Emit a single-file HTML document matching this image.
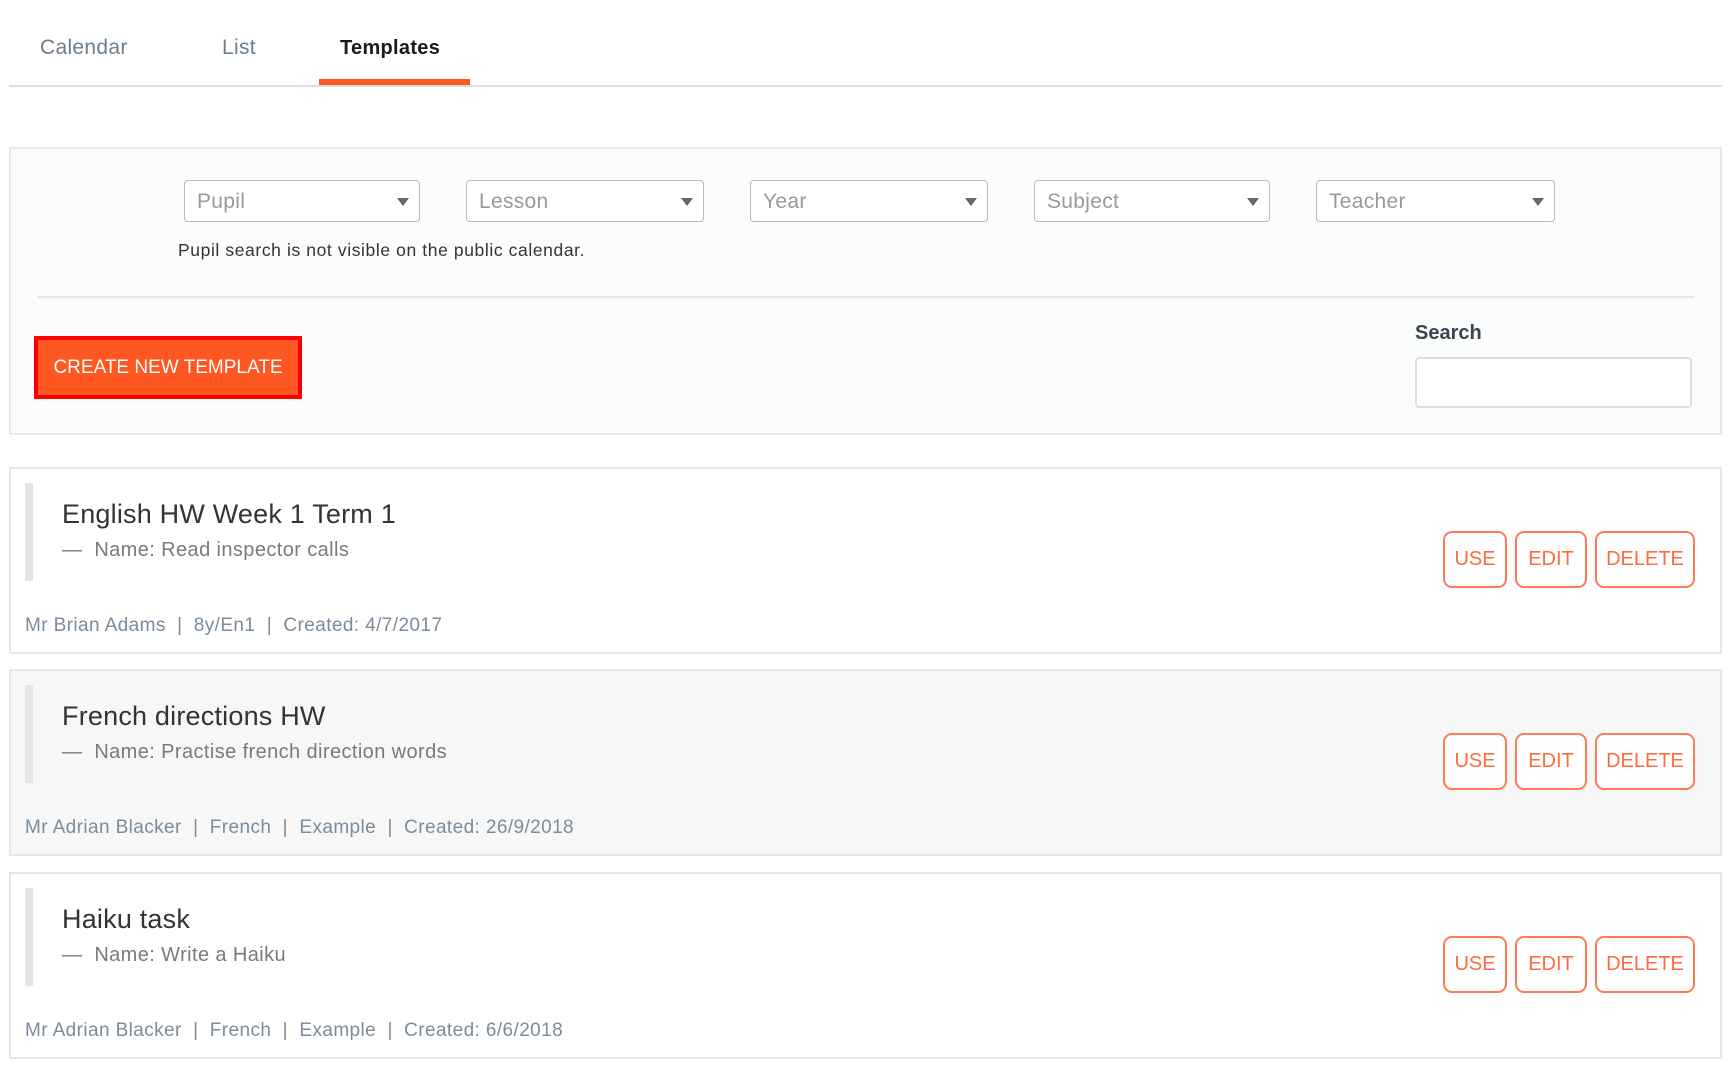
<!DOCTYPE html>
<html><head><meta charset="utf-8"><style>
*{box-sizing:border-box;margin:0;padding:0}
body{width:1731px;height:1068px;background:#fff;font-family:"Liberation Sans",sans-serif;position:relative;overflow:hidden}
.a{position:absolute;white-space:nowrap}
.tab{font-size:21px;color:#6c7d8c;top:36px;letter-spacing:0.3px}
.dd{position:absolute;top:180px;height:42px;border:1px solid #b9b9b9;border-radius:4px;background:#fff;font-size:21px;color:#999;padding:9px 12px;letter-spacing:0.3px}
.dd:after{content:"";position:absolute;right:10px;top:17px;border-left:6px solid transparent;border-right:6px solid transparent;border-top:8px solid #666}
.card{position:absolute;left:9px;width:1713px;border:2px solid #e6e6e6;height:187px}
.bar{position:absolute;left:14px;top:14px;width:8px;height:98px;background:#e6e6e6}
.t{position:absolute;left:51px;top:30px;font-size:27px;color:#333;letter-spacing:0.2px}
.n{position:absolute;left:51px;top:70px;font-size:20px;color:#7a7a7a;letter-spacing:0.4px}
.m{position:absolute;left:14px;top:146px;font-size:19px;color:#7a8c9c;letter-spacing:0.4px}
.b{position:absolute;top:62px;height:57px;border:2px solid #ff7b57;border-radius:9px;color:#ff6a3d;font-size:20px;text-align:center;line-height:53px;background:#fff}
</style></head><body>
<div class="a tab" style="left:40px">Calendar</div>
<div class="a tab" style="left:222px">List</div>
<div class="a tab" style="left:340px;color:#1a1a1a;font-weight:bold;font-size:20px;top:37px">Templates</div>
<div class="a" style="left:9px;top:85px;width:1713px;height:2px;background:#ddd"></div>
<div class="a" style="left:319px;top:79px;width:151px;height:6px;background:#ff5722"></div>

<div class="a" style="left:9px;top:147px;width:1713px;height:288px;background:#fbfcfc;border:2px solid #e8e8e8"></div>
<div class="dd" style="left:184px;width:236px">Pupil</div>
<div class="dd" style="left:466px;width:238px">Lesson</div>
<div class="dd" style="left:750px;width:238px">Year</div>
<div class="dd" style="left:1034px;width:236px">Subject</div>
<div class="dd" style="left:1316px;width:239px">Teacher</div>
<div class="a" style="left:178px;top:240px;font-size:17.5px;color:#333;letter-spacing:0.6px">Pupil search is not visible on the public calendar.</div>
<div class="a" style="left:37px;top:296px;width:1657px;height:2px;background:#e6e6e6"></div>
<div class="a" style="left:34px;top:336px;width:268px;height:63px;background:#ff5722;border:4px solid #f00;color:#fff;font-size:19px;line-height:55px;text-align:center">CREATE NEW TEMPLATE</div>
<div class="a" style="left:1415px;top:322px;font-size:20px;font-weight:bold;color:#3a4550">Search</div>
<div class="a" style="left:1415px;top:357px;width:277px;height:51px;background:#fff;border:2px solid #ddd;border-radius:4px"></div>

<div class="card" style="top:467px;background:#fff">
<div class="bar"></div><div class="t">English HW Week 1 Term 1</div><div class="n">— &nbsp;Name: Read inspector calls</div>
<div class="m">Mr Brian Adams &nbsp;| &nbsp;8y/En1 &nbsp;| &nbsp;Created: 4/7/2017</div>
<div class="b" style="left:1432px;width:64px">USE</div><div class="b" style="left:1504px;width:72px">EDIT</div><div class="b" style="left:1584px;width:100px">DELETE</div></div>

<div class="card" style="top:669px;background:#f7f7f7">
<div class="bar"></div><div class="t">French directions HW</div><div class="n">— &nbsp;Name: Practise french direction words</div>
<div class="m">Mr Adrian Blacker &nbsp;| &nbsp;French &nbsp;| &nbsp;Example &nbsp;| &nbsp;Created: 26/9/2018</div>
<div class="b" style="left:1432px;width:64px">USE</div><div class="b" style="left:1504px;width:72px">EDIT</div><div class="b" style="left:1584px;width:100px">DELETE</div></div>

<div class="card" style="top:872px;background:#fff">
<div class="bar"></div><div class="t">Haiku task</div><div class="n">— &nbsp;Name: Write a Haiku</div>
<div class="m">Mr Adrian Blacker &nbsp;| &nbsp;French &nbsp;| &nbsp;Example &nbsp;| &nbsp;Created: 6/6/2018</div>
<div class="b" style="left:1432px;width:64px">USE</div><div class="b" style="left:1504px;width:72px">EDIT</div><div class="b" style="left:1584px;width:100px">DELETE</div></div>
</body></html>
